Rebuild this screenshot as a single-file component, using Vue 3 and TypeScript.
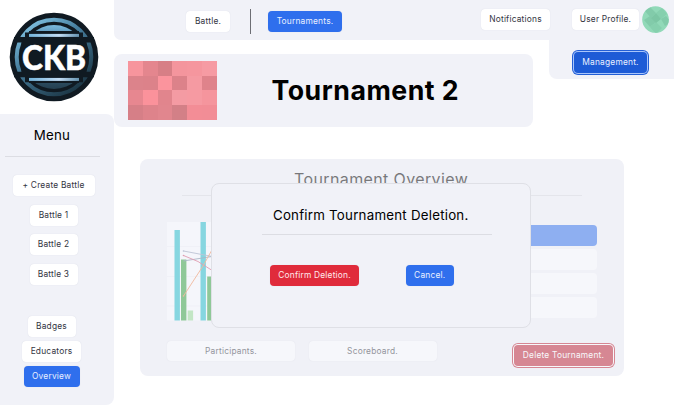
<script setup lang="ts">
interface NavItem {
  label: string
  kind: string
}

const battles: NavItem[] = [
  { label: '+ Create Battle', kind: 'create' },
  { label: 'Battle 1', kind: 'battle' },
  { label: 'Battle 2', kind: 'battle' },
  { label: 'Battle 3', kind: 'battle' },
]

const links: NavItem[] = [
  { label: 'Badges', kind: 'badges' },
  { label: 'Educators', kind: 'educators' },
  { label: 'Overview', kind: 'overview primary' },
]

const tiles: string[] = [
  '#f7959d', '#e4868e', '#d77f86', '#f4959d', '#f5969e', '#f69ba3',
  '#dc838b', '#dc828a', '#fb949d', '#dc828a', '#f59aa2', '#df838b',
  '#e78790', '#fb929b', '#e1858d', '#f49ba3', '#f69aa2', '#f5959d',
  '#d67f87', '#de838b', '#e1868e', '#d38087', '#f38d96', '#f28d96',
]
</script>

<template>
  <div class="page">
    <aside class="side">
      <div class="brand">
        <svg width="90" height="90" viewBox="0 0 90 90">
          <defs>
            <linearGradient id="ring" x1="0" y1="0" x2="0.7" y2="1">
              <stop offset="0" stop-color="#8ed2f2" />
              <stop offset="0.45" stop-color="#477f9f" />
              <stop offset="1" stop-color="#1d3847" />
            </linearGradient>
            <linearGradient id="dome" x1="0" y1="0" x2="0" y2="1">
              <stop offset="0" stop-color="#7ab9dc" />
              <stop offset="0.3" stop-color="#3c6e91" />
              <stop offset="0.7" stop-color="#3a627a" />
              <stop offset="1" stop-color="#243f50" />
            </linearGradient>
            <linearGradient id="bar" gradientUnits="userSpaceOnUse" x1="20" y1="0" x2="70" y2="0">
              <stop offset="0" stop-color="#74b5db" />
              <stop offset="0.6" stop-color="#c2dcf4" />
              <stop offset="1" stop-color="#6794b0" />
            </linearGradient>
          </defs>
          <circle cx="45" cy="45" r="44.3" fill="#101a22" />
          <circle cx="45" cy="45" r="37.3" fill="none" stroke="url(#ring)" stroke-width="4" />
          <circle cx="45" cy="45" r="32" fill="url(#dome)" />
          <path d="M20 20.300H70M20 69.700H70" stroke="#101a22" stroke-width="2.600" />
          <path d="M16 24H74M16 66.800H74" stroke="#101a22" stroke-width="7" />
          <rect x="20" y="21.900" width="50" height="3" fill="url(#bar)" />
          <rect x="20" y="65.900" width="50" height="3" fill="url(#bar)" />
          <path d="M5 27.800H85M5 62.500H85" stroke="#101a22" stroke-width="5.500" />
          <rect x="12.500" y="28" width="65" height="35" fill="#101a22" />
          <text x="13" y="57.800" textLength="64" lengthAdjust="spacingAndGlyphs" class="brand-text">CKB</text>
        </svg>
      </div>
      <nav class="menu">
        <h2 class="menu-title">Menu</h2>
        <div class="menu-rule"></div>
        <div class="battle-list">
          <button v-for="b in battles" :key="b.label" class="btn" :class="b.kind">{{ b.label }}</button>
        </div>
        <div class="link-list">
          <button v-for="l in links" :key="l.label" class="btn" :class="l.kind">{{ l.label }}</button>
        </div>
      </nav>
    </aside>

    <div class="main">
      <header class="top">
        <button class="btn nav-battle">Battle.</button>
        <span class="divider"></span>
        <button class="btn primary nav-tour">Tournaments.</button>
        <span class="spacer"></span>
        <button class="btn nav-note">Notifications</button>
        <button class="btn nav-user">User Profile.</button>
        <svg class="avatar" width="27" height="27" viewBox="0 0 27 27">
          <defs>
            <clipPath id="round"><circle cx="13.5" cy="13.5" r="13.3" /></clipPath>
          </defs>
          <g clip-path="url(#round)">
            <rect width="27" height="27" fill="#91d9b8" />
            <path d="M3 5L8 1L14 7L9 12Z M2 14L8 10L14 16L8 21Z M19 13L24 10L29 16L23 20Z" fill="#82cbaa" />
            <path d="M14 7L20 2L25 8L19 13Z M8 21L14 16L20 22L14 28Z" fill="#86d0ae" />
            <path d="M9 12L14 7L19 13L14 17Z" fill="#7cc6a4" />
          </g>
        </svg>
        <div class="dropdown">
          <button class="btn management">Management.</button>
        </div>
      </header>

      <section class="hero">
        <div class="mosaic">
          <span v-for="(c, i) in tiles" :key="i" :style="{ background: c }"></span>
        </div>
        <h1>Tournament 2</h1>
      </section>

      <section class="card">
        <div class="faded">
          <h2 class="card-title">Tournament Overview.</h2>
          <div class="card-rule"></div>
          <div class="content">
            <svg class="chart" width="100" height="99" viewBox="0 0 100 99">
              <rect width="100" height="98.500" fill="#fafbff" />
              <path d="M0 24.5H100M0 54.5H100M0 84H100" stroke="#eceef4" stroke-width="0.7" />
              <path d="M7.500 8h5.4v90.5H7.500zM33.500 0h5.4v98.500H33.500z" fill="#1fbccb" />
              <path d="M14 37.500h5.400v61h-5.400zM40.200 54.500h5.400v44h-5.400z" fill="#30a13c" />
              <path d="M20.700 88.500h5.400v10H20.700z" fill="#97dc95" />
              <g fill="none" stroke-width="0.9">
                <path d="M16.500 29L48 35" stroke="#8c98b4" />
                <path d="M16.500 39L48 34" stroke="#657f9a" />
                <path d="M16.500 33.500L31 39.500L46 49" stroke="#d24a6d" />
                <path d="M16.500 74L36 44L46 26" stroke="#f28246" />
              </g>
              <circle cx="16.500" cy="29" r="0.8" fill="#8c98b4" />
              <circle cx="16.500" cy="33.500" r="0.8" fill="#d24a6d" />
              <circle cx="16.500" cy="74" r="0.800" fill="#f28246" />
            </svg>
            <div class="rows">
              <div class="row head"></div>
              <div class="row"></div>
              <div class="row"></div>
              <div class="row"></div>
            </div>
          </div>
          <div class="actions">
            <button class="btn wide">Participants.</button>
            <button class="btn wide">Scoreboard.</button>
            <button class="btn delete">Delete Tournament.</button>
          </div>
        </div>

        <div class="modal" role="dialog">
          <h3>Confirm Tournament Deletion.</h3>
          <div class="modal-rule"></div>
          <div class="modal-actions">
            <button class="btn danger">Confirm Deletion.</button>
            <button class="btn primary cancel">Cancel.</button>
          </div>
        </div>
      </section>
    </div>
  </div>
</template>

<style>
body {
  margin: 0;
  background: #fff;
}
</style>

<style scoped>
.page {
  display: flex;
  width: 674px;
  height: 415px;
  overflow: hidden;
  font-family: Inter, "Liberation Sans", sans-serif;
  color: #000;
}

h1,
h2,
h3 {
  margin: 0;
  white-space: nowrap;
}

.btn {
  box-sizing: border-box;
  flex: none;
  height: 21px;
  padding: 0;
  border: 0;
  border-radius: 4px;
  background: #fff;
  box-shadow: 0 0 1px rgba(60, 70, 110, 0.18);
  color: #34363f;
  font: 400 8.4px/21px Inter, "Liberation Sans", sans-serif;
  letter-spacing: 0.2px;
  text-align: center;
  white-space: nowrap;
}

.btn.primary {
  background: #2f6fed;
  color: #e9f0ff;
}

.side {
  flex: none;
  width: 113.5px;
}

.brand {
  box-sizing: border-box;
  height: 114px;
  padding: 12px 0 0 9px;
}

.brand svg {
  display: block;
}

.brand-text {
  fill: #fff;
  stroke: #fff;
  stroke-width: 0.5px;
  font: 900 33.5px Lato, sans-serif;
}

.menu {
  box-sizing: border-box;
  height: 290.5px;
  padding-top: 12px;
  border-radius: 0 8px 8px 0;
  background: #f1f2f8;
}

.menu-title {
  width: 104px;
  font-size: 13.3px;
  font-weight: 400;
  line-height: 18px;
  letter-spacing: 0.25px;
  text-align: center;
}

.menu-rule {
  width: 95px;
  height: 1px;
  margin: 12px 0 0 5px;
  background: #dcdde3;
}

.battle-list,
.link-list {
  display: flex;
  flex-direction: column;
  align-items: center;
}

.battle-list {
  width: 107px;
  margin-top: 18px;
  gap: 8.5px;
}

.link-list {
  width: 103px;
  margin-top: 31px;
  gap: 4px;
}

.create { width: 82px; }
.battle { width: 48px; }
.badges { width: 48px; }
.educators { width: 59px; }
.overview { width: 56px; }

.main {
  flex: 1;
}

.top {
  position: relative;
  display: flex;
  box-sizing: border-box;
  height: 39.5px;
  padding: 8.500px 5.500px 0 72.5px;
  border-radius: 0 0 0 7px;
  background: #f1f2f8;
}

.nav-battle { width: 44px; margin-top: 2px; }
.nav-tour { width: 74px; margin: 2px 0 0 17px; }
.nav-note { width: 69px; margin-right: 22px; }
.nav-user { width: 67px; margin-right: 2.5px; }

.divider {
  width: 1px;
  height: 25px;
  margin-left: 20px;
  background: #6d6e74;
}

.spacer {
  flex: 1;
}

.avatar {
  flex: none;
  margin-top: -3px;
}

.dropdown {
  position: absolute;
  top: 39px;
  right: 0;
  box-sizing: border-box;
  width: 125px;
  height: 40px;
  padding: 10px 0 0 25px;
  border-radius: 0 0 0 8px;
  background: #f1f2f8;
}

.management {
  width: 73px;
  border: 0;
  background: #1d5bd6;
  box-shadow: 0 0 0 1px #a9c5fb, 0 0 0 2px #235fd6;
  color: #e9f0ff;
}

.hero {
  display: flex;
  align-items: center;
  width: 419px;
  height: 72.5px;
  margin-top: 14.500px;
  border-radius: 8px;
  background: #f1f2f8;
}

.mosaic {
  display: grid;
  grid-template-columns: repeat(6, 1fr);
  grid-template-rows: repeat(4, 1fr);
  flex: none;
  width: 89px;
  height: 59px;
  margin-left: 14.5px;
}

.hero h1 {
  margin-left: 54.500px;
  font-size: 26.7px;
  font-weight: 700;
  letter-spacing: 0.5px;
}

.card {
  position: relative;
  width: 483.5px;
  height: 217px;
  margin: 32.500px 0 0 26.5px;
  border-radius: 8px;
  background: #f0f1f7;
}

.faded {
  box-sizing: border-box;
  height: 100%;
  padding-top: 8px;
  opacity: 0.5;
}

.card-title {
  font-size: 16px;
  font-weight: 400;
  line-height: 24px;
  letter-spacing: 0.38px;
  text-indent: 2.5px;
  text-align: center;
}

.card-rule {
  height: 1px;
  margin: 4px 42px 0;
  background: #d9dae0;
}

.content {
  display: flex;
  justify-content: space-between;
  height: 99px;
  padding: 26px 26.500px 0;
}

.rows {
  display: flex;
  flex-direction: column;
  width: 130px;
  margin-top: 3px;
  gap: 3px;
}

.row {
  flex: none;
  height: 21px;
  border-radius: 4px;
  background: #fdfdff;
}

.row.head {
  background: #2f6fed;
}

.actions {
  display: flex;
  align-items: flex-start;
  margin: 20px 0 0 27px;
}

.wide {
  width: 128px;
  height: 20px;
  margin-right: 13.500px;
  line-height: 20px;
  background: #fdfdff;
}

.delete {
  width: 99px;
  margin: 4px 0 0 64px;
  background: #bd1f31;
  box-shadow: 0 0 0 1px #fff, 0 0 0 2px #bd1f31;
  color: #fff;
}

.modal {
  position: absolute;
  top: 24px;
  left: 71px;
  box-sizing: border-box;
  width: 319.500px;
  height: 145px;
  padding-top: 21.5px;
  border: 1px solid #dfe0e6;
  border-radius: 8px;
  background: #f1f2f8;
}

.modal h3 {
  font-size: 13.300px;
  font-weight: 400;
  line-height: 18px;
  letter-spacing: 0.23px;
  text-align: center;
}

.modal-rule {
  width: 230px;
  height: 1px;
  margin: 10.5px 0 0 50px;
  background: #dcdde3;
}

.modal-actions {
  display: flex;
  margin: 29.5px 0 0 58px;
  gap: 46.5px;
}

.danger {
  width: 89px;
  background: #e02b3b;
  color: #ffe9eb;
}

.cancel {
  width: 48.500px;
}
</style>
